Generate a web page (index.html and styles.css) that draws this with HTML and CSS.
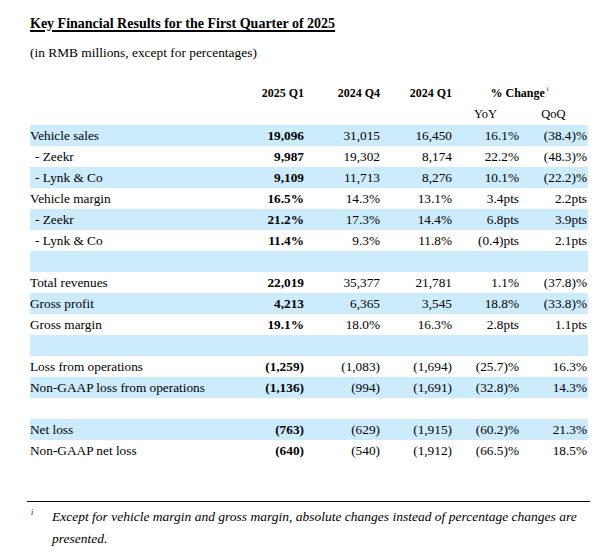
FILE: index.html
```html
<!DOCTYPE html>
<html lang="en">
<head>
<meta charset="utf-8">
<title>Key Financial Results</title>
<link rel="stylesheet" href="styles.css">
</head>
<body>
<main class="page">
  <h1 class="title">Key Financial Results for the First Quarter of 2025</h1>
  <p class="unit">(in RMB millions, except for percentages)</p>

  <table class="results">
    <colgroup>
      <col class="c-label">
      <col class="c-q1">
      <col class="c-q4">
      <col class="c-py">
      <col class="c-yoy">
      <col class="c-qoq">
    </colgroup>
    <thead>
      <tr class="head">
        <th></th>
        <th class="num">2025 Q1</th>
        <th class="num">2024 Q4</th>
        <th class="num">2024 Q1</th>
        <th class="change" colspan="2">% Change<sup class="ref">i</sup></th>
      </tr>
      <tr class="subhead">
        <th></th><th></th><th></th><th></th>
        <th class="ctr">YoY</th>
        <th class="ctr">QoQ</th>
      </tr>
    </thead>
    <tbody>
      <tr class="shade"><td>Vehicle sales</td><td class="num cur">19,096</td><td class="num">31,015</td><td class="num">16,450</td><td class="num">16.1%</td><td class="num">(38.4)%</td></tr>
      <tr><td class="sub">- Zeekr</td><td class="num cur">9,987</td><td class="num">19,302</td><td class="num">8,174</td><td class="num">22.2%</td><td class="num">(48.3)%</td></tr>
      <tr class="shade"><td class="sub">- Lynk &amp; Co</td><td class="num cur">9,109</td><td class="num">11,713</td><td class="num">8,276</td><td class="num">10.1%</td><td class="num">(22.2)%</td></tr>
      <tr><td>Vehicle margin</td><td class="num cur">16.5%</td><td class="num">14.3%</td><td class="num">13.1%</td><td class="num">3.4pts</td><td class="num">2.2pts</td></tr>
      <tr class="shade"><td class="sub">- Zeekr</td><td class="num cur">21.2%</td><td class="num">17.3%</td><td class="num">14.4%</td><td class="num">6.8pts</td><td class="num">3.9pts</td></tr>
      <tr><td class="sub">- Lynk &amp; Co</td><td class="num cur">11.4%</td><td class="num">9.3%</td><td class="num">11.8%</td><td class="num">(0.4)pts</td><td class="num">2.1pts</td></tr>
      <tr class="shade blank"><td colspan="6"></td></tr>
      <tr><td>Total revenues</td><td class="num cur">22,019</td><td class="num">35,377</td><td class="num">21,781</td><td class="num">1.1%</td><td class="num">(37.8)%</td></tr>
      <tr class="shade"><td>Gross profit</td><td class="num cur">4,213</td><td class="num">6,365</td><td class="num">3,545</td><td class="num">18.8%</td><td class="num">(33.8)%</td></tr>
      <tr><td>Gross margin</td><td class="num cur">19.1%</td><td class="num">18.0%</td><td class="num">16.3%</td><td class="num">2.8pts</td><td class="num">1.1pts</td></tr>
      <tr class="shade blank"><td colspan="6"></td></tr>
      <tr><td>Loss from operations</td><td class="num cur">(1,259)</td><td class="num">(1,083)</td><td class="num">(1,694)</td><td class="num">(25.7)%</td><td class="num">16.3%</td></tr>
      <tr class="shade"><td>Non-GAAP loss from operations</td><td class="num cur">(1,136)</td><td class="num">(994)</td><td class="num">(1,691)</td><td class="num">(32.8)%</td><td class="num">14.3%</td></tr>
      <tr class="blank"><td colspan="6"></td></tr>
      <tr class="shade"><td>Net loss</td><td class="num cur">(763)</td><td class="num">(629)</td><td class="num">(1,915)</td><td class="num">(60.2)%</td><td class="num">21.3%</td></tr>
      <tr><td>Non-GAAP net loss</td><td class="num cur">(640)</td><td class="num">(540)</td><td class="num">(1,912)</td><td class="num">(66.5)%</td><td class="num">18.5%</td></tr>
    </tbody>
  </table>

  <footer class="notes">
    <div class="note">
      <span class="mark">i</span>
      <p class="note-text">Except for vehicle margin and gross margin, absolute changes instead of percentage changes are presented.</p>
    </div>
  </footer>
</main>
</body>
</html>
```

FILE: styles.css
```css
html, body {
  margin: 0;
  padding: 0;
  background: #ffffff;
}

body {
  font-family: "Liberation Serif", "Times New Roman", serif;
  color: #000000;
}

.page {
  padding: 16px 25px 0 30px;
}

.title {
  margin: 0;
  font-size: 14px;
  line-height: 16px;
  font-weight: bold;
  text-decoration: underline;
  text-decoration-thickness: 1.5px;
  text-underline-offset: 2px;
}

.unit {
  margin: 13px 0 0 0;
  font-size: 13.4px;
  line-height: 16px;
}

.results {
  margin-top: 22px;
  width: 558px;
  border-collapse: collapse;
  border-spacing: 0;
  table-layout: fixed;
  font-size: 13.3px;
}

.c-label { width: 200px; }
.c-q1 { width: 74px; }
.c-q4 { width: 76px; }
.c-py { width: 72px; }
.c-yoy { width: 67px; }
.c-qoq { width: 69px; }

.results th,
.results td {
  padding: 0;
  height: 21px;
  line-height: 21px;
  white-space: nowrap;
  vertical-align: middle;
}

.results .head th {
  font-weight: bold;
  font-size: 12px;
}

.results .subhead th {
  font-weight: normal;
  font-size: 12.5px;
}

.results .num {
  text-align: right;
}

.results tbody td.num:last-child {
  padding-right: 1px;
}

.results .ctr {
  text-align: center;
}

.results .change {
  text-align: center;
  padding-right: 1px;
}

.ref {
  font-size: 6px;
  font-weight: normal;
  vertical-align: 6px;
  line-height: 0;
  margin-left: 2px;
}

.results .cur {
  font-weight: bold;
}

.results .sub {
  padding-left: 5px;
}

.results .shade td {
  background: #ccecfd;
}

.notes {
  margin-top: 40px;
  margin-left: -3px;
  width: 563px;
  border-top: 1.3px solid #000000;
}

.note {
  display: flex;
  align-items: flex-start;
  padding-top: 4px;
}

.mark {
  width: 25px;
  flex: none;
  padding-left: 4px;
  box-sizing: border-box;
  font-style: italic;
  font-size: 8px;
  line-height: 14px;
}

.note-text {
  margin: 0;
  width: 532px;
  font-style: italic;
  font-size: 13.5px;
  line-height: 22.4px;
}
```
